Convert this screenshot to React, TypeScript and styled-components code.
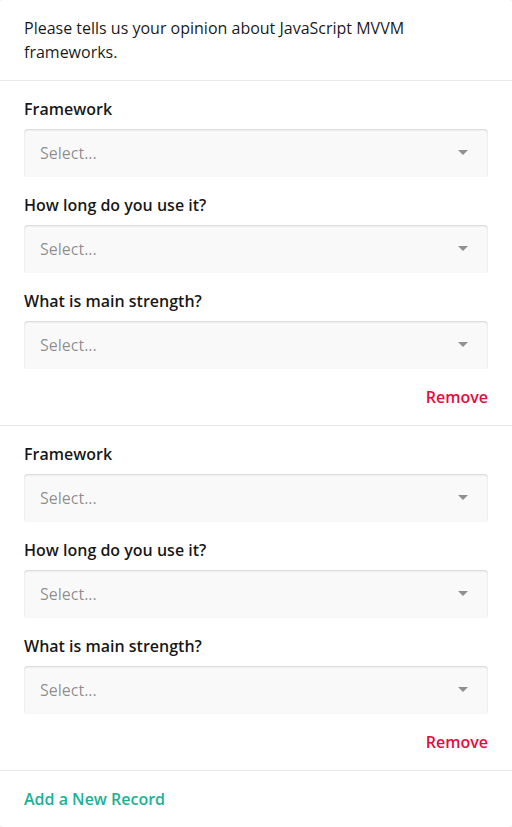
import React from "react";
import styled, { createGlobalStyle } from "styled-components";

const Global = createGlobalStyle`
  html, body { margin: 0; padding: 0; background: #f3f3f3; }
  body { font-family: "Open Sans", "Liberation Sans", sans-serif; }
  * { box-sizing: border-box; }
`;

const Card = styled.div`
  width: 512px;
  background: #ffffff;
  border-radius: 4px;
  overflow: hidden;
  color: rgba(0, 0, 0, 0.91);
  font-size: 16px;
  line-height: 24px;
`;

const Header = styled.div`
  padding: 16px 24px;
  border-bottom: 1px solid #e8e8e8;
`;

const Panel = styled.div`
  padding: 16px 24px;
  border-bottom: 1px solid #e8e8e8;
  display: flex;
  flex-direction: column;
  gap: 16px;
`;

const Question = styled.div`
  display: flex;
  flex-direction: column;
  gap: 8px;
`;

const Label = styled.div`
  font-size: 16px;
  line-height: 24px;
  font-weight: 600;
`;

const Select = styled.div`
  height: 48px;
  background: #f9f9f9;
  border-radius: 4px;
  box-shadow: inset 0 1px 2px rgba(0, 0, 0, 0.15);
  display: flex;
  align-items: center;
  justify-content: space-between;
  padding: 0 20px 0 16px;
  color: rgba(0, 0, 0, 0.45);
`;

const Actions = styled.div`
  display: flex;
  justify-content: flex-end;
`;

const TextButton = styled.span<{ $color: string }>`
  color: ${(p) => p.$color};
  font-size: 16px;
  line-height: 24px;
  font-weight: 600;
  cursor: pointer;
`;

const Footer = styled.div`
  padding: 16px 24px;
`;

const Arrow = () => (
  <svg width="10" height="6" viewBox="0 0 10 6">
    <path d="M0 0 H10 L5 5 Z" fill="#909090" />
  </svg>
);

const questions = ["Framework", "How long do you use it?", "What is main strength?"];

export default function App() {
  return (
    <>
      <Global />
      <Card>
        <Header>Please tells us your opinion about JavaScript MVVM frameworks.</Header>
        {[0, 1].map((i) => (
          <Panel key={i}>
            {questions.map((q) => (
              <Question key={q}>
                <Label>{q}</Label>
                <Select>
                  <span>Select...</span>
                  <Arrow />
                </Select>
              </Question>
            ))}
            <Actions>
              <TextButton $color="#e60a3e">Remove</TextButton>
            </Actions>
          </Panel>
        ))}
        <Footer>
          <TextButton $color="#19b394">Add a New Record</TextButton>
        </Footer>
      </Card>
    </>
  );
}
